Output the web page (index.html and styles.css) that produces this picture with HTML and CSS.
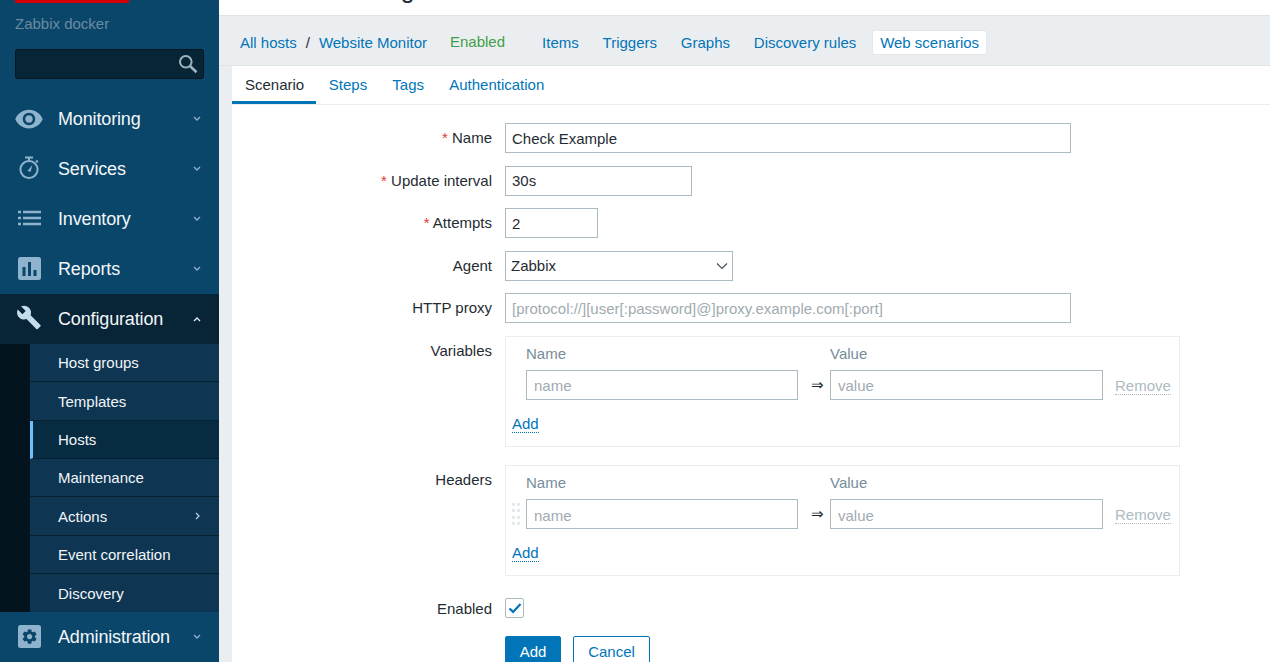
FILE: index.html
```html
<!DOCTYPE html>
<html lang="en">

<head>
    <meta charset="UTF-8">
    <title>Web monitoring</title>
    <link rel="stylesheet" href="styles.css">
</head>

<body>
    <aside class="sidebar">
        <div class="logo-bar"></div>
        <div class="server-name">Zabbix docker</div>
        <div class="search-box">
            <svg class="search-icon" width="20" height="20" viewBox="0 0 20 20">
                <circle cx="7.8" cy="7.8" r="5.8" fill="none" stroke="#9db4c0" stroke-width="2"/>
                <path d="M12 12l6.5 6.2" fill="none" stroke="#9db4c0" stroke-width="2.6"/>
            </svg>
        </div>

        <nav class="menu">
            <div class="menu-item">
                <svg class="menu-icon" width="30" height="30" viewBox="0 0 24 24">
                    <path fill="#8fb3cc" d="M12 4.5C7 4.5 2.73 7.61 1 12c1.73 4.39 6 7.5 11 7.5s9.27-3.11 11-7.5c-1.73-4.39-6-7.5-11-7.5zM12 17c-2.76 0-5-2.24-5-5s2.24-5 5-5 5 2.24 5 5-2.24 5-5 5zm0-8c-1.66 0-3 1.34-3 3s1.34 3 3 3 3-1.34 3-3-1.34-3-3-3z"/>
                </svg>
                <span class="menu-label">Monitoring</span>
                <svg class="chevron" width="8" height="6" viewBox="0 0 8 6"><path d="M1 1l3 3 3-3" fill="none" stroke="#8fb3cc" stroke-width="1.3"/></svg>
            </div>
            <div class="menu-item">
                <svg class="menu-icon" width="30" height="30" viewBox="0 0 30 30">
                    <circle cx="15" cy="15.5" r="8.6" fill="none" stroke="#8fb3cc" stroke-width="2"/>
                    <path d="M11 3.5h8M15 3.5v3.5M22 6.5l1.8 1.8" fill="none" stroke="#8fb3cc" stroke-width="2"/>
                    <path d="M13.4 17.1l5-6.2-1.8 6.8z" fill="#8fb3cc"/>
                </svg>
                <span class="menu-label">Services</span>
                <svg class="chevron" width="8" height="6" viewBox="0 0 8 6"><path d="M1 1l3 3 3-3" fill="none" stroke="#8fb3cc" stroke-width="1.3"/></svg>
            </div>
            <div class="menu-item">
                <svg class="menu-icon" width="30" height="30" viewBox="0 0 30 30">
                    <path d="M4 8.5h3M9 8.5h18M4 14.5h3M9 14.5h18M4 20.5h3M9 20.5h18" fill="none" stroke="#8fb3cc" stroke-width="2.4" transform="translate(0 -0.5)"/>
                </svg>
                <span class="menu-label">Inventory</span>
                <svg class="chevron" width="8" height="6" viewBox="0 0 8 6"><path d="M1 1l3 3 3-3" fill="none" stroke="#8fb3cc" stroke-width="1.3"/></svg>
            </div>
            <div class="menu-item">
                <svg class="menu-icon" width="30" height="30" viewBox="0 0 30 30">
                    <rect x="4" y="3" width="23" height="23" rx="2.5" fill="#8fb3cc"/>
                    <path d="M8.5 13h3v9h-3zM14 8h3v14h-3zM19.5 16h3v6h-3z" fill="#0a466a"/>
                </svg>
                <span class="menu-label">Reports</span>
                <svg class="chevron" width="8" height="6" viewBox="0 0 8 6"><path d="M1 1l3 3 3-3" fill="none" stroke="#8fb3cc" stroke-width="1.3"/></svg>
            </div>
            <div class="menu-item open">
                <svg class="menu-icon" width="30" height="30" viewBox="0 0 24 24">
                    <path fill="#c4dceb" transform="translate(1.6 0.4) scale(0.86)" d="M22.7 19l-9.1-9.1c.9-2.3.4-5-1.5-6.9-2-2-5-2.4-7.4-1.3L9 6 6 9 1.6 4.7C.4 7.1.9 10.1 2.9 12.1c1.9 1.9 4.6 2.4 6.9 1.5l9.1 9.1c.4.4 1 .4 1.4 0l2.3-2.3c.5-.4.5-1.1.1-1.4z"/>
                </svg>
                <span class="menu-label">Configuration</span>
                <svg class="chevron" width="8" height="6" viewBox="0 0 8 6"><path d="M1 5l3-3 3 3" fill="none" stroke="#e6eef3" stroke-width="1.3"/></svg>
            </div>
            <div class="submenu">
                <div class="sub-item">Host groups</div>
                <div class="sub-item">Templates</div>
                <div class="sub-item active">Hosts</div>
                <div class="sub-item">Maintenance</div>
                <div class="sub-item">Actions
                    <svg class="chevron" width="6" height="8" viewBox="0 0 6 8"><path d="M1 1l3 3-3 3" fill="none" stroke="#b8cedd" stroke-width="1.3"/></svg>
                </div>
                <div class="sub-item">Event correlation</div>
                <div class="sub-item">Discovery</div>
            </div>
            <div class="menu-item">
                <svg class="menu-icon" width="30" height="30" viewBox="0 0 30 30">
                    <rect x="4" y="3" width="23" height="23" rx="2.5" fill="#8fb3cc"/>
                    <path transform="translate(6.7 5.7) scale(0.74)" fill="#0a466a" d="M19.14 12.94c.04-.3.06-.61.06-.94 0-.32-.02-.64-.07-.94l2.03-1.58c.18-.14.23-.41.12-.61l-1.92-3.32c-.12-.22-.37-.29-.59-.22l-2.39.96c-.5-.38-1.03-.7-1.62-.94l-.36-2.54c-.04-.24-.24-.41-.48-.41h-3.84c-.24 0-.43.17-.47.41l-.36 2.54c-.59.24-1.13.57-1.62.94l-2.39-.96c-.22-.08-.47 0-.59.22L2.74 8.87c-.12.21-.08.47.12.61l2.03 1.58c-.05.3-.09.63-.09.94s.02.64.07.94l-2.03 1.58c-.18.14-.23.41-.12.61l1.92 3.32c.12.22.37.29.59.22l2.39-.96c.5.38 1.03.7 1.62.94l.36 2.54c.05.24.24.41.48.41h3.84c.24 0 .44-.17.47-.41l.36-2.54c.59-.24 1.13-.56 1.62-.94l2.39.96c.22.08.47 0 .59-.22l1.92-3.32c.12-.22.07-.47-.12-.61l-2.01-1.58zM12 15.6c-1.98 0-3.6-1.62-3.6-3.6s1.62-3.6 3.6-3.6 3.6 1.62 3.6 3.6-1.62 3.6-3.6 3.6z"/>
                </svg>
                <span class="menu-label">Administration</span>
                <svg class="chevron" width="8" height="6" viewBox="0 0 8 6"><path d="M1 1l3 3 3-3" fill="none" stroke="#8fb3cc" stroke-width="1.3"/></svg>
            </div>
        </nav>
    </aside>

    <main class="main">
        <header class="page-header">
            <h1>Web monitoring</h1>
        </header>

        <div class="host-nav">
            <a class="crumb" href="#">All hosts</a>
            <span class="crumb-sep">/</span>
            <a class="crumb" href="#">Website Monitor</a>
            <span class="status-enabled">Enabled</span>
            <a class="host-link" href="#">Items</a>
            <a class="host-link" href="#">Triggers</a>
            <a class="host-link" href="#">Graphs</a>
            <a class="host-link" href="#">Discovery rules</a>
            <a class="host-link selected" href="#">Web scenarios</a>
        </div>

        <section class="content">
            <div class="tabs">
                <a class="tab active" href="#">Scenario</a>
                <a class="tab" href="#">Steps</a>
                <a class="tab" href="#">Tags</a>
                <a class="tab" href="#">Authentication</a>
            </div>

            <form class="form">
                <div class="form-row">
                    <label><span class="required">*</span> Name</label>
                    <input class="input w-name" type="text" value="Check Example">
                </div>
                <div class="form-row">
                    <label><span class="required">*</span> Update interval</label>
                    <input class="input w-interval" type="text" value="30s">
                </div>
                <div class="form-row">
                    <label><span class="required">*</span> Attempts</label>
                    <input class="input w-attempts" type="text" value="2">
                </div>
                <div class="form-row">
                    <label>Agent</label>
                    <div class="select-wrap">
                        <select class="input select">
                            <option>Zabbix</option>
                        </select>
                        <svg class="select-arrow" width="12" height="8" viewBox="0 0 12 8"><path d="M1 1.5l5 5 5-5" fill="none" stroke="#3f4d55" stroke-width="1.1"/></svg>
                    </div>
                </div>
                <div class="form-row">
                    <label>HTTP proxy</label>
                    <input class="input w-name" type="text" placeholder="[protocol://][user[:password]@]proxy.example.com[:port]">
                </div>

                <div class="form-row">
                    <label>Variables</label>
                    <div class="pair-box">
                        <div class="pair-grid">
                            <span></span>
                            <span class="pair-head">Name</span>
                            <span></span>
                            <span class="pair-head">Value</span>
                            <span></span>

                            <span></span>
                            <input class="input" type="text" placeholder="name">
                            <span class="pair-arrow">⇒</span>
                            <input class="input" type="text" placeholder="value">
                            <a class="remove-link" href="#">Remove</a>
                        </div>
                        <a class="add-link" href="#">Add</a>
                    </div>
                </div>

                <div class="form-row headers-row">
                    <label>Headers</label>
                    <div class="pair-box">
                        <div class="pair-grid">
                            <span></span>
                            <span class="pair-head">Name</span>
                            <span></span>
                            <span class="pair-head">Value</span>
                            <span></span>

                            <svg width="8" height="22" viewBox="0 0 8 22">
                                <path fill="#e6e9eb" d="M0 0h3v3H0zM5 0h3v3H5zM0 6h3v3H0zM5 6h3v3H5zM0 13h3v3H0zM5 13h3v3H5zM0 19h3v3H0zM5 19h3v3H5z"/>
                            </svg>
                            <input class="input" type="text" placeholder="name">
                            <span class="pair-arrow">⇒</span>
                            <input class="input" type="text" placeholder="value">
                            <a class="remove-link" href="#">Remove</a>
                        </div>
                        <a class="add-link" href="#">Add</a>
                    </div>
                </div>

                <div class="form-row enabled-row">
                    <label>Enabled</label>
                    <div class="checkbox">
                        <svg width="14" height="12" viewBox="0 0 14 12"><path d="M1.5 6.5l3.6 3.4 7.4-8" fill="none" stroke="#0275b8" stroke-width="2.2"/></svg>
                    </div>
                </div>

                <div class="form-row buttons-row">
                    <span></span>
                    <div class="buttons">
                        <button class="btn-primary" type="button">Add</button>
                        <button class="btn-alt" type="button">Cancel</button>
                    </div>
                </div>
            </form>
        </section>
    </main>
</body>
</html>
```

FILE: styles.css
```css
/* Global */
* {
    margin: 0;
    padding: 0;
    box-sizing: border-box;
}

html,
body {
    height: 662px;
    overflow: hidden;
}

body {
    display: flex;
    font-family: 'Liberation Sans', Arial, sans-serif;
    font-size: 15px;
    color: #1f2c33;
    background-color: #ebeef0;
}

a {
    color: #0275b8;
    text-decoration: none;
}

/* Sidebar */
.sidebar {
    width: 219px;
    flex-shrink: 0;
    background-color: #0a466a;
}

.logo-bar {
    width: 114px;
    height: 3px;
    margin-left: 15px;
    background-color: #d40000;
}

.server-name {
    margin: 12px 0 0 15px;
    height: 18px;
    line-height: 18px;
    color: #6a8ba0;
}

.search-box {
    height: 30px;
    margin: 16px 15px 15px;
    background-color: #072536;
    border: 1px solid #04161f;
    border-radius: 3px;
    display: flex;
    justify-content: flex-end;
    align-items: center;
    padding-right: 5px;
}

.menu-item {
    height: 50px;
    padding: 0 18px 0 14px;
    display: flex;
    align-items: center;
    color: #f2f6f9;
}

.menu-item.open {
    background-color: #072536;
}

.menu-icon {
    flex-shrink: 0;
}

.menu-label {
    margin-left: 14px;
    font-size: 18px;
    letter-spacing: -0.15px;
    flex: 1;
}

.submenu {
    background-color: #03141e;
    padding-left: 30px;
}

.sub-item {
    height: 38.35px;
    padding: 0 18px 0 28px;
    display: flex;
    align-items: center;
    justify-content: space-between;
    background-color: #0e3551;
    border-bottom: 1px solid #05202f;
    color: #f2f6f9;
}

.sub-item:last-child {
    border-bottom: none;
}

.sub-item.active {
    background-color: #072b41;
    border-left: 3px solid #6ec0ff;
    padding-left: 25px;
}

/* Main area */
.main {
    flex: 1;
    min-width: 0;
}

.page-header {
    height: 16px;
    background-color: #fff;
    border-bottom: 1px solid #e0e3e6;
    padding-left: 21px;
    overflow: hidden;
}

.page-header h1 {
    font-size: 25px;
    font-weight: normal;
    line-height: 26px;
    white-space: nowrap;
    margin-top: -24px;
}

.host-nav {
    height: 50px;
    padding: 3px 21px 0;
    display: flex;
    align-items: center;
    border-bottom: 1px solid #dfe4e7;
}

.crumb-sep {
    margin: 0 9px;
}

.status-enabled {
    margin: -2px 29px 0 23px;
    color: #429e47;
}

.host-link {
    padding: 4px 8px;
    margin-right: 7.8px;
    border-radius: 2px;
}

.host-link.selected {
    background-color: #fff;
    border: 1px solid #e4e8ea;
    padding: 3px 7px;
}

.content {
    height: 596px;
    margin-left: 13px;
    background-color: #fff;
}

/* Tabs */
.tabs {
    height: 39px;
    display: flex;
    border-bottom: 1px solid #ebeef0;
}

.tab {
    height: 38px;
    line-height: 38px;
    padding: 0 12.6px;
}

.tab:first-child {
    padding: 0 12px 0 13px;
}

.tab.active {
    color: #1f2c33;
    border-bottom: 3px solid #0275b8;
}

/* Form */
.form {
    padding-top: 18px;
    display: flex;
    flex-direction: column;
    gap: 12.5px;
}

.form-row {
    display: grid;
    grid-template-columns: 260px 1fr;
    column-gap: 13px;
    align-items: start;
}

.form-row label {
    text-align: right;
    line-height: 30px;
}

.required {
    color: #e33734;
}

.input {
    height: 30px;
    padding: 0 6px;
    border: 1px solid #acbbc2;
    background-color: #fff;
    font-family: inherit;
    font-size: 15px;
    color: #1f2c33;
    width: 100%;
    outline: none;
    display: block;
}

.input::placeholder {
    color: #9fabb1;
    opacity: 1;
}

.w-name {
    width: 566px;
}

.w-interval {
    width: 187px;
}

.w-attempts {
    width: 93px;
}

.select-wrap {
    position: relative;
    width: 228px;
}

.select {
    appearance: none;
    padding-left: 5px;
}

.select-arrow {
    position: absolute;
    top: 11px;
    right: 5px;
}

/* Variables and headers boxes */
.pair-box {
    width: 675px;
    height: 111px;
    border: 1px solid #ebeef0;
    padding: 8px 6px 0;
}

.pair-grid {
    display: grid;
    grid-template-columns: 14px 272px 32px 273px auto;
    grid-template-rows: 25px 30px;
    align-items: center;
}

.pair-grid .input {
    padding: 2px 6px 0 7px;
}

.pair-head {
    color: #768d99;
    line-height: 18px;
    align-self: start;
}

.pair-arrow {
    text-align: center;
    font-size: 15px;
    padding-left: 7px;
}

.remove-link {
    margin: 3px 0 0 12px;
    color: #acbbc2;
    border-bottom: 1px dotted #acbbc2;
    line-height: 16px;
    justify-self: start;
}

.add-link {
    display: inline-block;
    margin-top: 16px;
    line-height: 16px;
    border-bottom: 1px dotted #0275b8;
}

.headers-row {
    margin-top: 6px;
}

.enabled-row {
    margin-top: 9px;
}

.enabled-row label {
    line-height: 21px;
}

.checkbox {
    width: 19px;
    height: 20px;
    border: 1px solid #acbbc2;
    border-radius: 2px;
    display: flex;
    align-items: center;
    justify-content: center;
}

.buttons-row {
    margin-top: 5px;
}

.buttons {
    display: flex;
    gap: 12px;
}

.btn-primary,
.btn-alt {
    height: 30px;
    flex-shrink: 0;
    font-family: inherit;
    font-size: 15px;
    border-radius: 2px;
    border: 1px solid #0275b8;
}

.btn-primary {
    width: 56px;
    background-color: #0275b8;
    color: #fff;
}

.btn-alt {
    width: 77px;
    background-color: #fff;
    color: #0275b8;
}
```
